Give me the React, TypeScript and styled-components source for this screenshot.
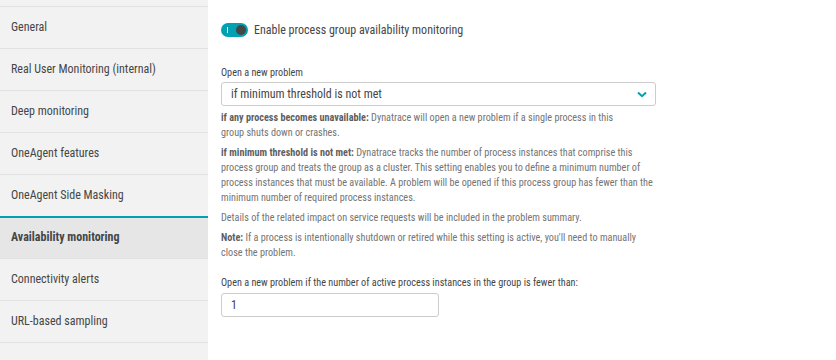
import styled, { createGlobalStyle } from 'styled-components'

const GlobalStyle = createGlobalStyle`
  html, body {
    margin: 0;
    padding: 0;
    background: #ffffff;
  }
  body {
    font-family: 'Roboto Condensed', Roboto, 'Liberation Sans', sans-serif;
    color: #454646;
  }
`

const Page = styled.div`
  display: flex;
  width: 836px;
  height: 360px;
  overflow: hidden;
`

const Sidebar = styled.nav`
  width: 208px;
  flex-shrink: 0;
  background: #f2f2f2;
  padding-top: 6px;
`

const NavItem = styled.div<{ $active?: boolean }>`
  display: flex;
  align-items: center;
  box-sizing: border-box;
  height: 42px;
  padding: 0 11px 2px;
  border-top: ${(p) => (p.$active ? '2px solid #00a1b2' : '1px solid #e2e2e2')};
  background: ${(p) => (p.$active ? '#e6e6e6' : 'transparent')};
  font-size: 12px;
  font-weight: ${(p) => (p.$active ? 700 : 400)};
  color: #454646;
  white-space: nowrap;
`

const Main = styled.main`
  flex: 1;
  padding: 23px 0 0 13px;
`

const ToggleRow = styled.label`
  display: flex;
  align-items: center;
  gap: 6px;
  font-size: 12px;
  line-height: 14px;
  color: #454646;
`

const Switch = styled.span`
  position: relative;
  display: inline-block;
  width: 27px;
  height: 14px;
  border-radius: 7px;
  background: #00a1b2;

  &::before {
    content: '';
    position: absolute;
    left: 6px;
    top: 4px;
    width: 1px;
    height: 6px;
    background: #ffffff;
  }

  &::after {
    content: '';
    position: absolute;
    right: 2px;
    top: 2px;
    width: 10px;
    height: 10px;
    border-radius: 50%;
    background: #454646;
  }
`

const FieldLabel = styled.div<{ $top: number }>`
  margin-top: ${(p) => p.$top}px;
  font-size: 10.2px;
  line-height: 15px;
  color: #454646;
`

const Select = styled.div`
  display: flex;
  align-items: center;
  justify-content: space-between;
  box-sizing: border-box;
  width: 435px;
  height: 24px;
  margin-top: 2px;
  padding: 0 8px 0 9px;
  border: 1px solid #cccccc;
  border-radius: 3px;
  font-size: 12px;
  color: #454646;
`

const Help = styled.div`
  margin-top: 4px;
`

const HelpText = styled.p<{ $width: number }>`
  width: ${(p) => p.$width}px;
  margin: 0 0 5px;
  font-size: 10.2px;
  line-height: 15px;
  color: #747474;

  b {
    font-weight: 700;
    color: #5f5f5f;
  }
`

const NumberInput = styled.div`
  box-sizing: border-box;
  width: 218px;
  height: 24px;
  margin-top: 3px;
  padding: 0 9px;
  display: flex;
  align-items: center;
  border: 1px solid #cccccc;
  border-radius: 3px;
  font-size: 12px;
  color: #454646;
`

const Chevron = () => (
  <svg width="10" height="7" viewBox="0 0 10 7">
    <path d="M1 1.5 L5 5.2 L9 1.5" fill="none" stroke="#00a1b2" strokeWidth="2" />
  </svg>
)

const navItems = [
  'General',
  'Real User Monitoring (internal)',
  'Deep monitoring',
  'OneAgent features',
  'OneAgent Side Masking',
  'Availability monitoring',
  'Connectivity alerts',
  'URL-based sampling',
  '',
]

export default function App() {
  return (
    <>
      <GlobalStyle />
      <Page>
        <Sidebar>
          {navItems.map((item, i) => (
            <NavItem key={i} $active={item === 'Availability monitoring'}>
              {item}
            </NavItem>
          ))}
        </Sidebar>
        <Main>
          <ToggleRow>
            <Switch />
            Enable process group availability monitoring
          </ToggleRow>
          <FieldLabel $top={28}>Open a new problem</FieldLabel>
          <Select>
            <span>if minimum threshold is not met</span>
            <Chevron />
          </Select>
          <Help>
            <HelpText $width={405}>
              <b>if any process becomes unavailable:</b> Dynatrace will open a new problem if a single process in this
              group shuts down or crashes.
            </HelpText>
            <HelpText $width={438}>
              <b>if minimum threshold is not met:</b> Dynatrace tracks the number of process instances that comprise
              this process group and treats the group as a cluster. This setting enables you to define a minimum number
              of process instances that must be available. A problem will be opened if this process group has fewer than
              the minimum number of required process instances.
            </HelpText>
            <HelpText $width={438}>
              Details of the related impact on service requests will be included in the problem summary.
            </HelpText>
            <HelpText $width={425}>
              <b>Note:</b> If a process is intentionally shutdown or retired while this setting is active, you'll need to
              manually close the problem.
            </HelpText>
          </Help>
          <FieldLabel $top={15}>
            Open a new problem if the number of active process instances in the group is fewer than:
          </FieldLabel>
          <NumberInput>1</NumberInput>
        </Main>
      </Page>
    </>
  )
}
